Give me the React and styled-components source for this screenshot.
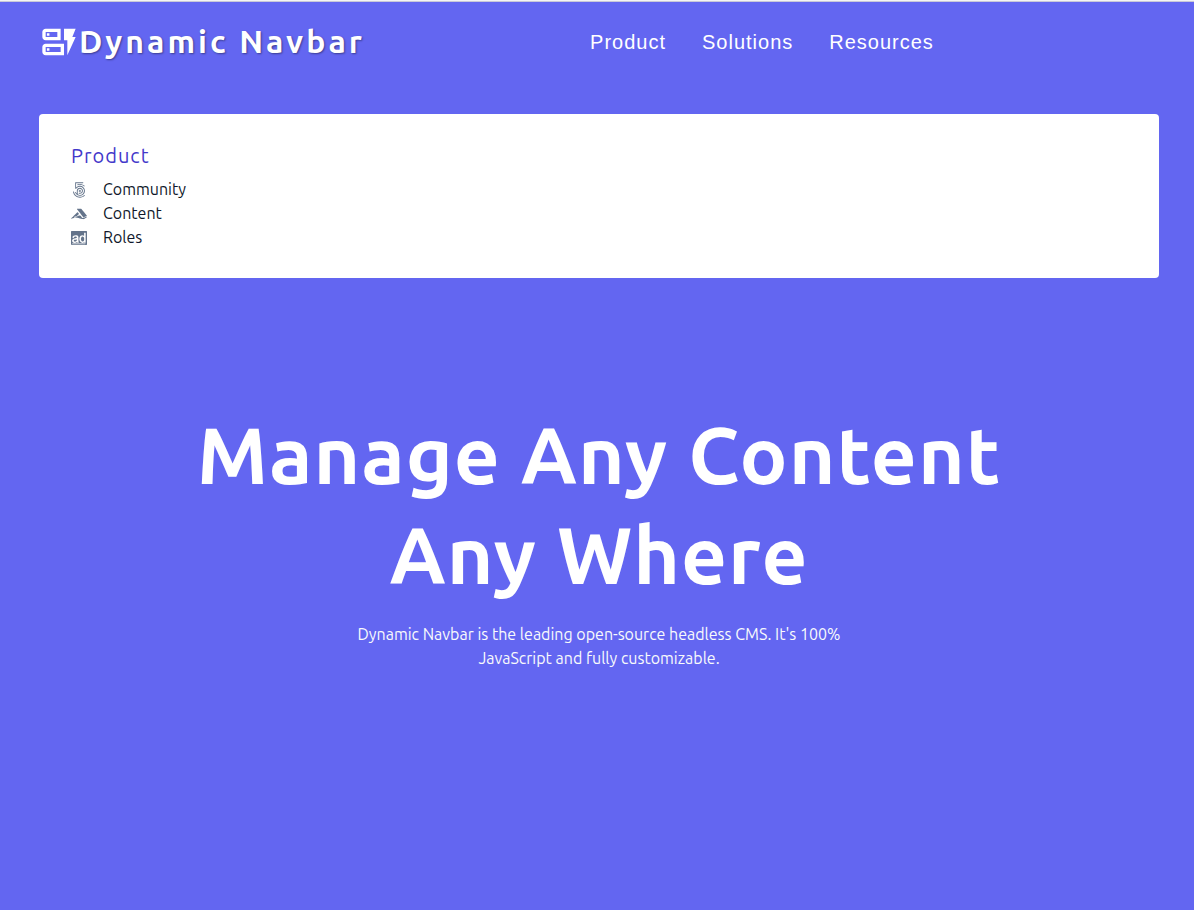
import React from "react";
import styled, { createGlobalStyle } from "styled-components";
import { MdOutlineDynamicForm } from "react-icons/md";
import { Fa500Px, FaAccusoft, FaAdversal } from "react-icons/fa";

const GlobalStyle = createGlobalStyle`
  *, *::before, *::after { box-sizing: border-box; }
  body {
    margin: 0;
    background: #6366f1;
    color: #ffffff;
    font-family: Ubuntu, "Noto Sans", sans-serif;
    font-size: 16px;
    line-height: 24px;
  }
`;

const Page = styled.div`
  min-height: 100vh;
  padding: 0 35px 0 39px;
  border-top: 1px solid #f4f4f4;
  box-shadow: inset 0 1px 0 #c9c9d8;
`;

const Header = styled.header`
  display: flex;
  align-items: center;
  height: 81px;
`;

const Brand = styled.a`
  display: flex;
  align-items: flex-start;
  color: #ffffff;
  font-size: 32px;
  font-weight: 600;
  line-height: 38px;
  letter-spacing: 3px;
  text-decoration: none;
  text-shadow: 1px 1px 2px rgba(0, 0, 0, 0.4);
`;

const Nav = styled.nav`
  display: flex;
  gap: 36px;
  margin: 0 auto;
`;

const NavButton = styled.button`
  padding: 0;
  border: 0;
  background: none;
  color: #ffffff;
  font: 20px/30px "Liberation Sans", Arial, sans-serif;
  letter-spacing: 1px;
  cursor: pointer;
`;

const Submenu = styled.section`
  margin-top: 32px;
  padding: 28px 32px;
  border-radius: 4px;
  background: #ffffff;
`;

const SubmenuTitle = styled.h4`
  margin: 0 0 8px;
  color: #4338ca;
  font-size: 20px;
  font-weight: 400;
  line-height: 28px;
  letter-spacing: 1px;
`;

const LinkList = styled.ul`
  margin: 0;
  padding: 0;
  list-style: none;
`;

const SubmenuLink = styled.a`
  display: flex;
  align-items: flex-start;
  gap: 16px;
  min-height: 24px;
  color: #0f172a;
  line-height: 22px;
  text-decoration: none;

  svg {
    margin-top: 4px;
    color: #64748b;
  }
`;

const Hero = styled.main`
  display: flex;
  flex-direction: column;
  align-items: center;
  padding-top: 126px;
  text-align: center;
`;

const Headline = styled.h1`
  max-width: 896px;
  margin: 0;
  font-size: 80px;
  font-weight: 600;
  line-height: 100px;
  letter-spacing: 1px;
`;

const Intro = styled.p`
  max-width: 512px;
  margin: 18px 0 0;
  color: #f8fafc;
`;

const sections = ["Product", "Solutions", "Resources"];

const productLinks = [
  { label: "Community", Icon: Fa500Px },
  { label: "Content", Icon: FaAccusoft },
  { label: "Roles", Icon: FaAdversal },
];

export default function App() {
  return (
    <Page>
      <GlobalStyle />
      <Header>
        <Brand href="#home">
          <MdOutlineDynamicForm size={40} aria-hidden="true" />
          Dynamic Navbar
        </Brand>
        <Nav aria-label="Main">
          {sections.map((name) => (
            <NavButton key={name} type="button">{name}</NavButton>
          ))}
        </Nav>
      </Header>
      <Submenu aria-labelledby="submenu-title">
        <SubmenuTitle id="submenu-title">Product</SubmenuTitle>
        <LinkList>
          {productLinks.map(({ label, Icon }) => (
            <li key={label}>
              <SubmenuLink href={`#${label.toLowerCase()}`}>
                <Icon size={16} aria-hidden="true" />
                {label}
              </SubmenuLink>
            </li>
          ))}
        </LinkList>
      </Submenu>
      <Hero>
        <Headline>
          Manage Any Content
          <br />
          Any Where
        </Headline>
        <Intro>
          Dynamic Navbar is the leading open-source headless CMS. It's 100%
          JavaScript and fully customizable.
        </Intro>
      </Hero>
    </Page>
  );
}
